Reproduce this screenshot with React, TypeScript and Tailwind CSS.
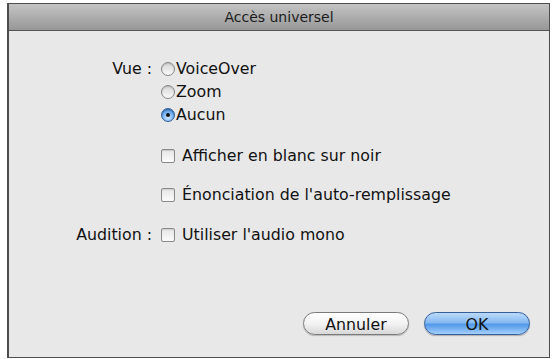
import type { ReactNode } from "react";

function Radio({ checked, label }: { checked?: boolean; label: string }) {
  return (
    <div className="flex h-[20px] items-center gap-[1px]">
      {checked ? (
        <span className="flex h-[14px] w-[14px] items-center justify-center rounded-full border border-[#2f5f9c] bg-[radial-gradient(circle_at_50%_70%,#d6ebff_0%,#7db6f2_45%,#3478d2_100%)] shadow-[inset_0_1px_1px_rgba(0,0,0,0.3)]">
          <span className="h-[4px] w-[4px] rounded-full bg-[#111]" />
        </span>
      ) : (
        <span className="h-[14px] w-[14px] rounded-full border border-[#858585] bg-gradient-to-b from-[#d6d6d6] to-[#fafafa] shadow-[inset_0_1px_1px_rgba(0,0,0,0.15)]" />
      )}
      <span>{label}</span>
    </div>
  );
}

function Checkbox({ label }: { label: string }) {
  return (
    <div className="flex h-[20px] items-center gap-[7px]">
      <span className="h-[14px] w-[14px] rounded-[2px] border border-[#8a8a8a] bg-gradient-to-b from-[#e6e6e6] to-[#fbfbfb] shadow-[inset_0_1px_1px_rgba(0,0,0,0.12)]" />
      <span>{label}</span>
    </div>
  );
}

function Row({ label, children, className = "" }: { label?: string; children: ReactNode; className?: string }) {
  return (
    <div className={`flex ${className}`}>
      <div className="flex h-[20px] w-[143px] shrink-0 items-center justify-end">{label}</div>
      <div className="ml-[9px]">{children}</div>
    </div>
  );
}

export default function App() {
  return (
    <div className="h-[359px] w-[554px] bg-white pl-[7px] pt-[3px] text-[#111] [font-family:'DejaVu_Sans',sans-serif]">
      <div className="flex h-[355px] w-[543px] flex-col border border-[#4d4d4d] border-l-2 bg-[#e8e8e8]">
        <div className="flex h-[27px] shrink-0 items-center justify-center border-b border-[#555] bg-gradient-to-b from-[#c4c4c4] to-[#979797] text-[14px] text-[#1c1c1c]">
          Accès universel
        </div>

        <div className="flex flex-1 flex-col pt-[28px] text-[15.8px]">
          <Row label="Vue :">
            <div className="flex flex-col gap-[3px]">
              <Radio label="VoiceOver" />
              <Radio label="Zoom" />
              <Radio label="Aucun" checked />
            </div>
          </Row>
          <Row className="mt-[21px]">
            <Checkbox label="Afficher en blanc sur noir" />
          </Row>
          <Row className="mt-[19px]">
            <Checkbox label="Énonciation de l'auto-remplissage" />
          </Row>
          <Row label="Audition :" className="mt-[20px]">
            <Checkbox label="Utiliser l'audio mono" />
          </Row>

          <div className="mt-auto flex justify-end gap-[15px] pb-[22px] pr-[19px]">
            <button className="h-[23px] w-[106px] rounded-full border border-[#7a7a7a] bg-gradient-to-b from-[#ffffff] via-[#f3f3f3] to-[#d8d8d8] shadow-[0_1px_1px_rgba(0,0,0,0.2)]">
              Annuler
            </button>
            <button className="h-[23px] w-[106px] rounded-full border border-[#35609c] bg-[linear-gradient(to_bottom,#bcdaf9_0%,#86baf2_45%,#5299ea_55%,#a4d0fb_100%)] shadow-[0_1px_1px_rgba(0,0,0,0.25)]">
              OK
            </button>
          </div>
        </div>
      </div>
    </div>
  );
}
